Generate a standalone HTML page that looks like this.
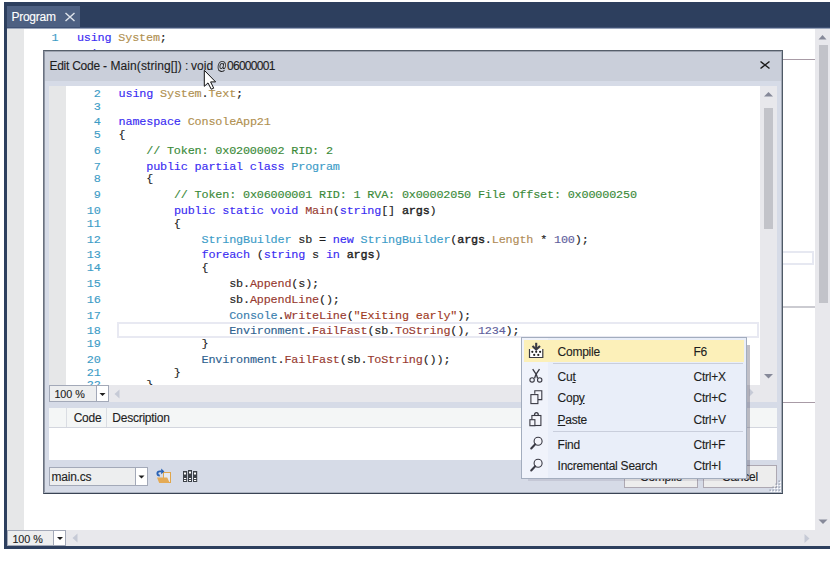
<!DOCTYPE html>
<html><head><meta charset="utf-8"><style>
html,body{margin:0;padding:0;background:#fff;width:830px;height:568px;overflow:hidden;position:relative}
div,svg{position:absolute}
.sx{font-family:"Liberation Sans",sans-serif;font-size:12.0px;letter-spacing:-0.25px;line-height:14px;white-space:pre;-webkit-text-stroke:0.12px}
.ln{left:40.599999999999994px;width:60px;text-align:right;font-family:"Liberation Mono",monospace;font-size:11.8px;letter-spacing:-0.17px;-webkit-text-stroke:0.14px;line-height:14px;color:#3D9CC6;white-space:pre}
.cl{left:118.6px;font-family:"Liberation Mono",monospace;font-size:11.8px;letter-spacing:-0.17px;-webkit-text-stroke:0.14px;line-height:14px;color:#1E1E1E;white-space:pre}
.k{color:#3A2CF2}
.t{color:#3C9CC8}
.ts1{color:#3A7EAE}
.ts2{color:#2F6290}
.m{color:#983A30}
.s{color:#A03A24}
.c{color:#3A8A38}
.n{color:#B09050}
.p{color:#B08C58}
.num{color:#5E5E9C}
.b{-webkit-text-stroke:0.4px}
u{text-decoration:underline;text-underline-offset:1px}
</style></head>
<body>
<div style="position:absolute;left:4px;top:2px;width:826px;height:547px;background:#2D3F5E"></div>
<div style="position:absolute;left:7px;top:6px;width:73px;height:21px;background:#4D6082"></div>
<div style="position:absolute;left:7px;top:27px;width:823px;height:1px;background:#3F5174"></div>
<div style="position:absolute;left:7px;top:28px;width:823px;height:1px;background:#9AA5BA"></div>
<div class="sx" style="left:11.4px;top:10.04px;color:#fff">Program</div>
<svg style="position:absolute;left:64px;top:12px" width="12" height="10"><path d="M1.5 1 L10.5 9 M10.5 1 L1.5 9" stroke="#DDE2EA" stroke-width="1.45" fill="none"/></svg>
<div style="position:absolute;left:7px;top:29px;width:823px;height:517px;background:#fff"></div>
<div style="position:absolute;left:7px;top:29px;width:17px;height:501px;background:#E6E7E8"></div>
<div class="ln" style="left:-1.5px;top:30.86px">1</div>
<div class="cl" style="left:76.9px;top:30.86px"><span class="k">using</span> <span class="n">System</span>;</div>
<div class="ln" style="left:-1.5px;top:46.86px">2</div>
<div class="cl" style="left:76.9px;top:46.86px"><span class="k">using</span> <span class="n">System</span>.<span class="n">Text</span>;</div>
<div style="position:absolute;left:783px;top:59px;width:32px;height:1px;background:#A89BA6"></div>
<div style="position:absolute;left:783px;top:251px;width:31px;height:14px;border:2px solid #E6E8F1;border-left:none;box-sizing:border-box"></div>
<div style="position:absolute;left:783px;top:306px;width:32px;height:2px;background:#CBCBD1"></div>
<div style="position:absolute;left:783px;top:402px;width:32px;height:1px;background:#A89BA6"></div>
<div style="position:absolute;left:815px;top:29px;width:15px;height:501px;background:#E8E8EC"></div>
<div style="position:absolute;left:819px;top:45px;width:9px;height:258px;background:#C2C3C9"></div>
<svg style="position:absolute;left:815px;top:28px" width="15" height="20"><path d="M3.5 11.5 L11.5 11.5 L7.5 7 Z" fill="#868999"/></svg>
<svg style="position:absolute;left:815px;top:512px" width="15" height="18"><path d="M3.5 7.5 L12.5 7.5 L8 12 Z" fill="#868999"/></svg>
<div style="position:absolute;left:7px;top:530px;width:823px;height:16px;background:#E8E8EC"></div>
<div style="position:absolute;left:7px;top:530px;width:59px;height:16px;border:1px solid #A3A9B8;box-sizing:border-box;background:#EDEEEF"></div>
<div style="position:absolute;left:53px;top:531px;width:11px;height:14px;background:#fff;border-left:1px solid #A3A9B8"></div>
<svg style="position:absolute;left:54px;top:531px" width="12" height="14"><path d="M3 6 L9 6 L6 9 Z" fill="#1E1E1E"/></svg>
<div class="sx" style="left:12.4px;top:532.26px;font-size:10.8px;letter-spacing:-0.05px;color:#1E1E1E">100 %</div>
<svg style="position:absolute;left:70px;top:531px" width="10" height="14"><path d="M7.5 2.5 L7.5 11.5 L2.5 7 Z" fill="#C6CAD6"/></svg>
<svg style="position:absolute;left:802px;top:531px" width="10" height="14"><path d="M2.5 3 L2.5 12 L7.5 7.5 Z" fill="#C6CAD6"/></svg>
<div style="position:absolute;left:43px;top:50px;width:740px;height:444px;background:#D6DBE7;border-style:solid;border-width:1px;border-color:#555E6A #4F5A66 #3A4454 #6A7180;box-sizing:border-box"></div>
<div style="position:absolute;left:44px;top:51px;width:738px;height:30px;background:#CACFDA"></div>
<div style="position:absolute;left:44px;top:51px;width:738px;height:1px;background:#9DA3AF"></div>
<div style="position:absolute;left:44px;top:51px;width:1px;height:442px;background:#8F96A3"></div>
<div style="position:absolute;left:781px;top:51px;width:1px;height:442px;background:#A3AAB7"></div>
<div style="position:absolute;left:44px;top:492px;width:738px;height:1px;background:#AEB5C2"></div>
<div class="sx" style="left:49.4px;top:59.44px;color:#1E1E1E">Edit Code -</div>
<div class="sx" style="left:110.4px;top:59.44px;color:#1E1E1E;letter-spacing:0.1px">Main(string[])</div>
<div class="sx" style="left:184.9px;top:59.44px;color:#1E1E1E">:</div>
<div class="sx" style="left:190.9px;top:59.44px;color:#1E1E1E;letter-spacing:0.1px">void</div>
<div class="sx" style="left:217.0px;top:59.44px;color:#1E1E1E;transform:scaleX(0.8);transform-origin:0 0">@</div>
<div class="sx" style="left:227.0px;top:59.44px;color:#1E1E1E;letter-spacing:-0.72px">06000001</div>
<svg style="position:absolute;left:757px;top:58px" width="16" height="14"><path d="M3.5 3.5 L12.5 10.5 M12.5 3.5 L3.5 10.5" stroke="#1E1E1E" stroke-width="1.5" fill="none"/></svg>
<div style="position:absolute;left:49px;top:86px;width:711px;height:299px;background:#fff"></div>
<div style="position:absolute;left:49px;top:86px;width:17px;height:299px;background:#E6E7E8"></div>
<div style="position:absolute;left:117px;top:322px;width:642px;height:16px;border:2px solid #E8E9F2;box-sizing:border-box"></div>
<div class="ln" style="top:86.86px">2</div>
<div class="cl" style="top:86.86px"><span class="k">using</span> <span class="n">System</span>.<span class="n">Text</span>;</div>
<div class="ln" style="top:99.86px">3</div>
<div class="cl" style="top:99.86px"></div>
<div class="ln" style="top:114.86px">4</div>
<div class="cl" style="top:114.86px"><span class="k">namespace</span> <span class="n">ConsoleApp21</span></div>
<div class="ln" style="top:127.86px">5</div>
<div class="cl" style="top:127.86px">{</div>
<div class="ln" style="top:143.86px">6</div>
<div class="cl" style="top:143.86px">    <span class="c">// Token: 0x02000002 RID: 2</span></div>
<div class="ln" style="top:159.86px">7</div>
<div class="cl" style="top:159.86px">    <span class="k">public partial class</span> <span class="t">Program</span></div>
<div class="ln" style="top:171.86px">8</div>
<div class="cl" style="top:171.86px">    {</div>
<div class="ln" style="top:187.86px">9</div>
<div class="cl" style="top:187.86px">        <span class="c">// Token: 0x06000001 RID: 1 RVA: 0x00002050 File Offset: 0x00000250</span></div>
<div class="ln" style="top:203.86px">10</div>
<div class="cl" style="top:203.86px">        <span class="k">public static void</span> <span class="m">Main</span>(<span class="k">string</span>[] <span class="b">args</span>)</div>
<div class="ln" style="top:216.86px">11</div>
<div class="cl" style="top:216.86px">        {</div>
<div class="ln" style="top:232.86px">12</div>
<div class="cl" style="top:232.86px">            <span class="t">StringBuilder</span> sb = <span class="k">new</span> <span class="t">StringBuilder</span>(<span class="b">args</span>.<span class="p">Length</span> * <span class="num">100</span>);</div>
<div class="ln" style="top:247.86px">13</div>
<div class="cl" style="top:247.86px">            <span class="k">foreach</span> (<span class="k">string</span> s <span class="k">in</span> <span class="b">args</span>)</div>
<div class="ln" style="top:260.86px">14</div>
<div class="cl" style="top:260.86px">            {</div>
<div class="ln" style="top:276.86px">15</div>
<div class="cl" style="top:276.86px">                sb.<span class="m">Append</span>(s);</div>
<div class="ln" style="top:292.86px">16</div>
<div class="cl" style="top:292.86px">                sb.<span class="m">AppendLine</span>();</div>
<div class="ln" style="top:308.86px">17</div>
<div class="cl" style="top:308.86px">                <span class="ts1">Console</span>.<span class="m">WriteLine</span>(<span class="s">&quot;Exiting early&quot;</span>);</div>
<div class="ln" style="top:323.86px">18</div>
<div class="cl" style="top:323.86px">                <span class="ts2">Environment</span>.<span class="m">FailFast</span>(sb.<span class="m">ToString</span>(), <span class="num">1234</span>);</div>
<div class="ln" style="top:336.86px">19</div>
<div class="cl" style="top:336.86px">            }</div>
<div class="ln" style="top:352.86px">20</div>
<div class="cl" style="top:352.86px">            <span class="ts2">Environment</span>.<span class="m">FailFast</span>(sb.<span class="m">ToString</span>());</div>
<div class="ln" style="top:365.86px">21</div>
<div class="cl" style="top:365.86px">        }</div>
<div class="ln" style="top:377.86px">22</div>
<div class="cl" style="top:377.86px">    }</div>
<div style="position:absolute;left:760px;top:86px;width:17px;height:299px;background:#E8E8EC"></div>
<div style="position:absolute;left:764px;top:108px;width:9px;height:121px;background:#C2C3C9"></div>
<svg style="position:absolute;left:760px;top:86px" width="17" height="16"><path d="M4 10.5 L13 10.5 L8.5 6 Z" fill="#868999"/></svg>
<svg style="position:absolute;left:760px;top:368px" width="17" height="16"><path d="M4 6 L13 6 L8.5 10.5 Z" fill="#868999"/></svg>
<div style="position:absolute;left:49px;top:385px;width:728px;height:17px;background:#E8E8EC"></div>
<div style="position:absolute;left:49px;top:385px;width:60px;height:17px;border:1px solid #A3A9B8;box-sizing:border-box;background:#EDEEEF"></div>
<div style="position:absolute;left:96px;top:386px;width:11px;height:15px;background:#fff;border-left:1px solid #A3A9B8"></div>
<svg style="position:absolute;left:96px;top:387px" width="12" height="14"><path d="M3.5 6 L9.5 6 L6.5 9 Z" fill="#1E1E1E"/></svg>
<div class="sx" style="left:54.4px;top:387.26px;font-size:10.8px;letter-spacing:-0.05px;color:#1E1E1E">100 %</div>
<svg style="position:absolute;left:112px;top:387px" width="10" height="14"><path d="M7.5 2.5 L7.5 11.5 L2.5 7 Z" fill="#C6CAD6"/></svg>
<svg style="position:absolute;left:746px;top:386px" width="10" height="14"><path d="M3.5 2.5 L3.5 10.5 L7.5 6.5 Z" fill="#C6CAD6"/></svg>
<div style="position:absolute;left:49px;top:408px;width:728px;height:52px;background:#fff"></div>
<div style="position:absolute;left:49px;top:408px;width:728px;height:20px;background:#F4F6F6;border-bottom:1px solid #D3D6DE;box-sizing:border-box"></div>
<div style="position:absolute;left:66px;top:408px;width:1px;height:19px;background:#DADDE3"></div>
<div style="position:absolute;left:106px;top:408px;width:1px;height:19px;background:#DADDE3"></div>
<div class="sx" style="left:73.7px;top:410.84px;color:#1E1E1E">Code</div>
<div class="sx" style="left:112.3px;top:410.84px;color:#1E1E1E">Description</div>
<div style="position:absolute;left:49px;top:467px;width:99px;height:19px;border:1px solid #A3A9B8;box-sizing:border-box;background:#EDEEEF"></div>
<div style="position:absolute;left:135px;top:468px;width:11px;height:17px;background:#fff;border-left:1px solid #A3A9B8"></div>
<svg style="position:absolute;left:135px;top:468px" width="13" height="17"><path d="M3.5 7.5 L9.5 7.5 L6.5 10.5 Z" fill="#1E1E1E"/></svg>
<div class="sx" style="left:51.6px;top:469.84px;color:#1E1E1E">main.cs</div>
<svg style="position:absolute;left:153px;top:466px" width="20" height="20">
<rect x="10.5" y="6.5" width="7" height="10" fill="#E6E9F1" stroke="#E0A64C" stroke-width="1"/>
<path d="M4 11.6 L14.2 11.6 L16.8 16.9 L6.2 16.9 Z" fill="#E4AA55"/>
<path d="M6.8 9.6 C3.6 9.6 3.6 5.4 6.8 5.4 L8.6 5.4" stroke="#2A62B5" stroke-width="1.9" fill="none"/>
<path d="M8.2 2.6 L11.4 5.4 L8.2 8.2 Z" fill="#2A62B5"/>
</svg>
<svg style="position:absolute;left:182px;top:469px" width="17" height="14">
<rect x="1" y="2" width="4.2" height="11" fill="#3D4249"/>
<rect x="6" y="1" width="4" height="12" fill="#3D4249"/>
<rect x="11" y="2" width="4.2" height="11" fill="#3D4249"/>
<rect x="2" y="3.5" width="2" height="2" fill="#fff"/><rect x="7" y="2.5" width="2" height="2" fill="#fff"/><rect x="12" y="3.5" width="2" height="2" fill="#fff"/>
<rect x="2" y="9" width="2.2" height="1" fill="#fff"/><rect x="7" y="9" width="2" height="1" fill="#fff"/><rect x="12" y="9" width="2.2" height="1" fill="#fff"/>
<rect x="2" y="11" width="2.2" height="1" fill="#fff"/><rect x="7" y="11" width="2" height="1" fill="#fff"/><rect x="12" y="11" width="2.2" height="1" fill="#fff"/>
</svg>
<div style="position:absolute;left:624px;top:465px;width:74px;height:23px;background:#EDEDED;border:1px solid #ADA8B2;box-sizing:border-box"></div>
<div class="sx" style="left:640px;top:469.84px;color:#1E1E1E">Compile</div>
<div style="position:absolute;left:703px;top:465px;width:74px;height:23px;background:#EDEDED;border:1px solid #ADA8B2;box-sizing:border-box"></div>
<div class="sx" style="left:722px;top:469.84px;color:#1E1E1E">Cancel</div>
<svg style="position:absolute;left:762px;top:474px" width="24" height="24"><rect x="17.5" y="7.5" width="1.5" height="1.5" fill="#FFFFFF"/><rect x="16.5" y="6.5" width="1.3" height="1.3" fill="#9098A8"/><rect x="14.5" y="10.5" width="1.5" height="1.5" fill="#FFFFFF"/><rect x="13.5" y="9.5" width="1.3" height="1.3" fill="#9098A8"/><rect x="17.5" y="10.5" width="1.5" height="1.5" fill="#FFFFFF"/><rect x="16.5" y="9.5" width="1.3" height="1.3" fill="#9098A8"/><rect x="11.5" y="13.5" width="1.5" height="1.5" fill="#FFFFFF"/><rect x="10.5" y="12.5" width="1.3" height="1.3" fill="#9098A8"/><rect x="14.5" y="13.5" width="1.5" height="1.5" fill="#FFFFFF"/><rect x="13.5" y="12.5" width="1.3" height="1.3" fill="#9098A8"/><rect x="17.5" y="13.5" width="1.5" height="1.5" fill="#FFFFFF"/><rect x="16.5" y="12.5" width="1.3" height="1.3" fill="#9098A8"/><rect x="8.5" y="16.5" width="1.5" height="1.5" fill="#FFFFFF"/><rect x="7.5" y="15.5" width="1.3" height="1.3" fill="#9098A8"/><rect x="11.5" y="16.5" width="1.5" height="1.5" fill="#FFFFFF"/><rect x="10.5" y="15.5" width="1.3" height="1.3" fill="#9098A8"/><rect x="14.5" y="16.5" width="1.5" height="1.5" fill="#FFFFFF"/><rect x="13.5" y="15.5" width="1.3" height="1.3" fill="#9098A8"/><rect x="17.5" y="16.5" width="1.5" height="1.5" fill="#FFFFFF"/><rect x="16.5" y="15.5" width="1.3" height="1.3" fill="#9098A8"/></svg>
<div style="position:absolute;left:747px;top:345px;width:2.5px;height:135px;background:rgba(70,66,90,0.34);filter:blur(0.5px)"></div>
<div style="position:absolute;left:528px;top:479px;width:220px;height:2px;background:rgba(70,66,90,0.12);filter:blur(0.6px)"></div>
<div style="position:absolute;left:521px;top:337px;width:226px;height:142px;background:#E9EEF9;border:1px solid #A3ADBE;box-sizing:border-box"></div>
<div style="position:absolute;left:522px;top:338px;width:26px;height:140px;background:#F0F3FB"></div>
<div style="position:absolute;left:524px;top:340px;width:220px;height:22px;background:#FCF0B9"></div>
<div style="position:absolute;left:553px;top:363px;width:190px;height:1px;background:#C9CEDC"></div>
<div style="position:absolute;left:553px;top:431px;width:190px;height:1px;background:#C9CEDC"></div>
<div class="sx" style="left:557.6px;top:344.84px;color:#1E1E1E">Compile</div>
<div class="sx" style="left:693.5px;top:344.84px;color:#1E1E1E">F6</div>
<div class="sx" style="left:557.6px;top:369.84px;color:#1E1E1E">Cu<u>t</u></div>
<div class="sx" style="left:693.5px;top:369.84px;color:#1E1E1E">Ctrl+X</div>
<div class="sx" style="left:557.6px;top:390.84px;color:#1E1E1E">Cop<u>y</u></div>
<div class="sx" style="left:693.5px;top:390.84px;color:#1E1E1E">Ctrl+C</div>
<div class="sx" style="left:557.6px;top:412.84px;color:#1E1E1E"><u>P</u>aste</div>
<div class="sx" style="left:693.5px;top:412.84px;color:#1E1E1E">Ctrl+V</div>
<div class="sx" style="left:557.6px;top:437.84px;color:#1E1E1E">Find</div>
<div class="sx" style="left:693.5px;top:437.84px;color:#1E1E1E">Ctrl+F</div>
<div class="sx" style="left:557.6px;top:458.84px;color:#1E1E1E">Incremental Search</div>
<div class="sx" style="left:693.5px;top:458.84px;color:#1E1E1E">Ctrl+I</div>
<svg style="position:absolute;left:524px;top:340px" width="24" height="22">
<rect x="5.5" y="9" width="13" height="8.5" fill="#FFFFFF"/>
<path d="M5.5 9 L5.5 17.5 L18.8 17.5 L18.8 9" stroke="#3A3A44" stroke-width="1.2" fill="none"/>
<path d="M12.2 2.8 L12.2 8.5" stroke="#3A3A44" stroke-width="2.1"/>
<path d="M8.5 6 L12.2 9.5 L16 6" stroke="#3A3A44" stroke-width="2.1" fill="none"/>
<circle cx="8.3" cy="11.8" r="1.1" fill="#222"/><circle cx="12.2" cy="11.8" r="1.1" fill="#222"/><circle cx="16.1" cy="11.8" r="1.1" fill="#222"/>
<circle cx="10.2" cy="14.9" r="1.1" fill="#222"/><circle cx="14.3" cy="14.9" r="1.1" fill="#222"/>
</svg>
<svg style="position:absolute;left:524px;top:364px" width="24" height="22">
<circle cx="8.1" cy="15.9" r="2.2" stroke="#3A3A44" stroke-width="1.1" fill="none"/>
<circle cx="15.7" cy="15.9" r="2.2" stroke="#3A3A44" stroke-width="1.1" fill="none"/>
<path d="M8.7 5.2 L12.4 10.6 L13.6 14.2 M15.5 5.2 L11.8 10.6 L10.6 14.2" stroke="#3A3A44" stroke-width="1.35" fill="none" stroke-linejoin="round"/>
</svg>
<svg style="position:absolute;left:524px;top:386px" width="24" height="22">
<path d="M10.8 7.8 L10.8 4.8 L17.8 4.8 L17.8 13.6 L14 13.6" stroke="#3A3A44" stroke-width="1.1" fill="#F4F5FB"/>
<rect x="6.9" y="8.6" width="7" height="9" stroke="#3A3A44" stroke-width="1.1" fill="#F4F5FB"/>
</svg>
<svg style="position:absolute;left:524px;top:408px" width="24" height="22">
<rect x="7.9" y="7.5" width="9" height="10" stroke="#3A3A44" stroke-width="1.1" fill="#F4F5FB"/>
<path d="M10.5 7.2 C10.5 3.8 14.3 3.8 14.3 7.2" stroke="#3A3A44" stroke-width="1.3" fill="none"/>
<rect x="5.9" y="11.7" width="5" height="6" stroke="#3A3A44" stroke-width="1.1" fill="#F4F5FB"/>
</svg>
<svg style="position:absolute;left:524px;top:432px" width="24" height="22">
<circle cx="14.1" cy="9.3" r="4" stroke="#3A3A44" stroke-width="1.1" fill="#F4F5FB"/>
<path d="M11.2 12.2 L7.2 16.5" stroke="#3A3A44" stroke-width="2" stroke-linecap="round"/>
</svg>
<svg style="position:absolute;left:524px;top:454px" width="24" height="22">
<circle cx="14.1" cy="9.3" r="4" stroke="#3A3A44" stroke-width="1.1" fill="#F4F5FB"/>
<path d="M11.2 12.2 L7.2 16.5" stroke="#3A3A44" stroke-width="2" stroke-linecap="round"/>
</svg>
<svg style="position:absolute;left:203px;top:69px" width="15" height="23">
<path d="M1.3 1.3 L1.3 17.3 L5 13.9 L8.2 20.2 L10.7 19.2 L7.6 12.9 L12.6 12.9 Z" fill="#fff" stroke="#111" stroke-width="1" stroke-linejoin="round"/>
</svg>
</body></html>
